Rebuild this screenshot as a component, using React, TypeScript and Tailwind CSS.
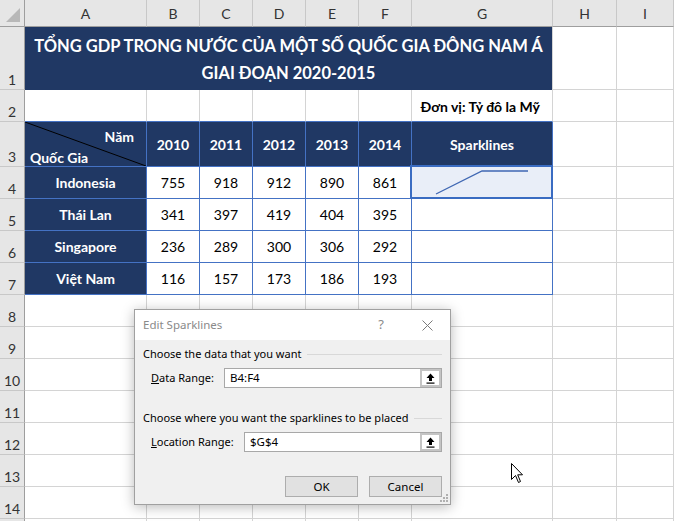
import React from "react";

const GRID = "border-r border-b border-[#d4d4d4] bg-white";
const TB = "border-r border-b border-[#4472c4]";
const NAVY = "bg-[#203864] text-white font-bold";
const RH =
  "bg-[#e6e6e6] border-r border-b border-r-[#9e9e9e] border-b-[#c8c8c8] flex items-end justify-center leading-[18px] text-[14px] text-[#333]";

const years = ["2010", "2011", "2012", "2013", "2014"];
const data: [string, number[]][] = [
  ["Indonesia", [755, 918, 912, 890, 861]],
  ["Thái Lan", [341, 397, 419, 404, 395]],
  ["Singapore", [236, 289, 300, 306, 292]],
  ["Việt Nam", [116, 157, 173, 186, 193]],
];

function UpArrow() {
  return (
    <svg width="9" height="11" viewBox="0 0 9 11">
      <path d="M4.5 0.5 L8.5 5 L6 5 L6 8 L3 8 L3 5 L0.5 5 Z" fill="#000" />
      <rect x="0.5" y="9.5" width="8" height="1.2" fill="#000" />
    </svg>
  );
}

function RangeInput({ value }: { value: string }) {
  return (
    <div className="flex h-[20px] flex-1 items-stretch border border-[#a8a8a8] bg-white">
      <div className="flex flex-1 items-center pl-[5px] text-[11.5px] leading-none text-black">{value}</div>
      <div className="flex w-[21px] items-center justify-center border-2 border-[#c4c4c4] bg-white">
        <UpArrow />
      </div>
    </div>
  );
}

export default function App() {
  const extraRows = [8, 9, 10, 11, 12, 13, 14];
  return (
    <div
      className="relative h-[521px] w-[674px] overflow-hidden bg-white"
      style={{ fontFamily: '"Lato", "Open Sans", sans-serif' }}
    >
      <div className="grid grid-cols-[25px_122px_53px_53px_53px_53px_53px_141px_64px_1fr] grid-rows-[27px_63px_32px_45px_repeat(12,32px)]">
        {/* Header row */}
        <div className="relative bg-[#e6e6e6] border-r border-b border-r-[#9e9e9e] border-b-[#9e9e9e]">
          <div
            className="absolute bottom-[4px] right-[4px] h-[14px] w-[14px] bg-[#b8b8b8]"
            style={{ clipPath: "polygon(100% 0, 100% 100%, 0 100%)" }}
          />
        </div>
        {["A", "B", "C", "D", "E", "F", "G", "H", "I"].map((c) => (
          <div
            key={c}
            className="flex items-center justify-center bg-[#e6e6e6] border-r border-b border-r-[#c8c8c8] border-b-[#9e9e9e] text-[14px] text-[#333]"
          >
            {c}
          </div>
        ))}

        {/* Row 1 */}
        <div className={RH}>1</div>
        <div
          className={`col-span-7 flex items-center justify-center border-r border-[#d4d4d4] ${NAVY} text-center text-[16.5px] leading-[27px] pt-[3px] whitespace-nowrap`}
        >
          <div>
            TỔNG GDP TRONG NƯỚC CỦA MỘT SỐ QUỐC GIA ĐÔNG NAM Á
            <br />
            GIAI ĐOẠN 2020-2015
          </div>
        </div>
        <div className={GRID} />
        <div className={GRID} />

        {/* Row 2 */}
        <div className={RH}>2</div>
        {[0, 1, 2, 3, 4, 5].map((i) => (
          <div key={i} className="border-r border-b border-r-[#d4d4d4] border-b-[#4472c4] bg-white" />
        ))}
        <div className="flex items-end justify-end border-r border-b border-r-[#d4d4d4] border-b-[#4472c4] bg-white pb-[4px] pr-[12px] text-[14px] font-bold text-black">
          Đơn vị: Tỷ đô la Mỹ
        </div>
        <div className={GRID} />
        <div className={GRID} />

        {/* Row 3 */}
        <div className={RH}>3</div>
        <div className={`relative ${TB} ${NAVY} text-[14px]`}>
          <svg className="absolute inset-0 h-full w-full" viewBox="0 0 121 44" preserveAspectRatio="none">
            <line x1="0" y1="0" x2="121" y2="44" stroke="#000" strokeWidth="1" />
          </svg>
          <div className="absolute right-[12px] top-[4px]">Năm</div>
          <div className="absolute left-[5px] top-[25px]">Quốc Gia</div>
        </div>
        {years.map((y) => (
          <div key={y} className={`flex items-center justify-center ${TB} ${NAVY} text-[14px]`}>
            {y}
          </div>
        ))}
        <div className={`flex items-center justify-center ${TB} ${NAVY} text-[14px]`}>Sparklines</div>
        <div className={GRID} />
        <div className={GRID} />

        {/* Rows 4-7 */}
        {data.map(([name, vals], ri) => (
          <React.Fragment key={name}>
            <div className={RH}>{ri + 4}</div>
            <div className={`flex items-center justify-center ${TB} ${NAVY} text-[14px]`}>{name}</div>
            {vals.map((v, vi) => (
              <div key={vi} className={`flex items-center justify-center ${TB} bg-white text-[14px] text-black`}>
                {v}
              </div>
            ))}
            {ri === 0 ? (
              <div className={`relative ${TB} bg-[#e9eef8]`}>
                <div className="absolute -left-[2px] -top-[2px] -right-[1px] -bottom-[1px] border-2 border-[#3a6cc2]" />
                <svg className="absolute left-0 top-0" width="140" height="31" viewBox="0 0 140 31">
                  <polyline points="24,27 70,4 116,4" fill="none" stroke="#3f67b3" strokeWidth="1.3" />
                </svg>
              </div>
            ) : (
              <div className={`${TB} bg-white`} />
            )}
            <div className={GRID} />
            <div className={GRID} />
          </React.Fragment>
        ))}

        {/* Rows 8+ */}
        {extraRows.map((r) => (
          <React.Fragment key={r}>
            <div className={RH}>{r}</div>
            {[0, 1, 2, 3, 4, 5, 6, 7, 8].map((c) => (
              <div key={c} className={GRID} />
            ))}
          </React.Fragment>
        ))}
        <div className={RH} />
        {[0, 1, 2, 3, 4, 5, 6, 7, 8].map((c) => (
          <div key={c} className={GRID} />
        ))}
      </div>

      {/* Dialog */}
      <div
        className="absolute left-[134px] top-[309px] flex h-[196px] w-[317px] flex-col border border-[#a0a0a0] bg-[#f0f0f0] shadow-[0_2px_12px_rgba(0,0,0,0.28)]"
        style={{ fontFamily: '"Noto Sans", "Open Sans", sans-serif' }}
      >
        <div className="flex h-[30px] items-center bg-white pl-[8px]">
          <span className="text-[11.5px] text-[#8a8a8a]">Edit Sparklines</span>
          <div className="ml-auto flex h-full">
            <div className="flex w-[46px] items-center justify-center text-[13px] text-[#8a8a8a]">?</div>
            <div className="flex w-[46px] items-center justify-center">
              <svg width="11" height="11" viewBox="0 0 11 11">
                <path d="M0.5 0.5 L10.5 10.5 M10.5 0.5 L0.5 10.5" stroke="#7a7a7a" strokeWidth="1" />
              </svg>
            </div>
          </div>
        </div>
        <div className="flex flex-1 flex-col px-[8px] text-[11px] text-black">
          <div className="mt-[6px] flex items-center gap-[6px] leading-[16px]">
            <span>Choose the data that you want</span>
            <div className="h-px flex-1 bg-[#d8d8d8]" />
          </div>
          <div className="mt-[6px] flex items-center pl-[8px]">
            <span className="w-[73px]">
              <span className="underline">D</span>ata Range:
            </span>
            <RangeInput value="B4:F4" />
          </div>
          <div className="mt-[22px] flex items-center gap-[6px] leading-[16px]">
            <span>Choose where you want the sparklines to be placed</span>
            <div className="h-px flex-1 bg-[#d8d8d8]" />
          </div>
          <div className="mt-[6px] flex items-center pl-[8px]">
            <span className="w-[93px]">
              <span className="underline">L</span>ocation Range:
            </span>
            <RangeInput value="$G$4" />
          </div>
          <div className="mt-[24px] flex justify-end gap-[11px] text-[11.5px]">
            <div className="flex h-[21px] w-[73px] items-center justify-center border border-[#adadad] bg-[#e1e1e1]">OK</div>
            <div className="flex h-[21px] w-[73px] items-center justify-center border border-[#adadad] bg-[#e1e1e1]">Cancel</div>
          </div>
        </div>
        <svg className="absolute bottom-[2px] right-[2px]" width="8" height="8" viewBox="0 0 8 8">
          <rect x="6" y="0" width="2" height="2" fill="#b0b0b0" />
          <rect x="3" y="3" width="2" height="2" fill="#b0b0b0" />
          <rect x="6" y="3" width="2" height="2" fill="#b0b0b0" />
          <rect x="0" y="6" width="2" height="2" fill="#b0b0b0" />
          <rect x="3" y="6" width="2" height="2" fill="#b0b0b0" />
          <rect x="6" y="6" width="2" height="2" fill="#b0b0b0" />
        </svg>
      </div>

      {/* Cursor */}
      <svg className="absolute left-[511px] top-[463px]" width="13" height="21" viewBox="0 0 13 21">
        <path
          d="M0.5 0.5 L0.5 16.5 L4.5 12.5 L7.5 19.5 L9.5 18.5 L6.7 11.8 L11.5 11.8 Z"
          fill="#fff"
          stroke="#000"
          strokeWidth="1"
          strokeLinejoin="miter"
        />
      </svg>
    </div>
  );
}
